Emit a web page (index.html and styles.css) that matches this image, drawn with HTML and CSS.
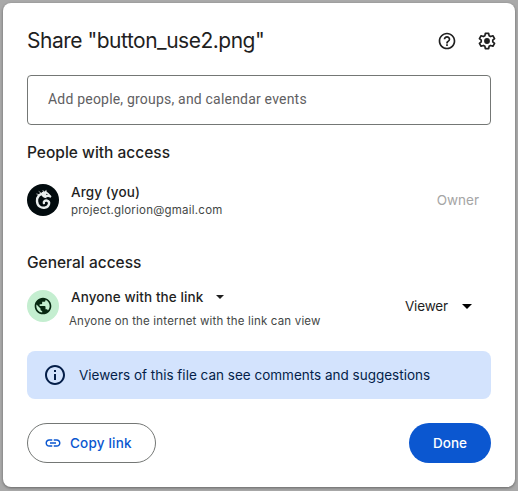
FILE: index.html
```
<!DOCTYPE html>
<html lang="en">
<head>
<meta charset="utf-8">
<title>Share</title>
<link rel="stylesheet" href="styles.css">
</head>
<body>
<main class="dialog">
  <header class="header">
    <h1 class="title"><span>Share "button_use2.png"</span></h1>
    <svg class="icon" viewBox="0 0 24 24"><path d="M11 18h2v-2h-2v2zm1-16C6.480 2 2 6.480 2 12s4.480 10 10 10 10-4.480 10-10S17.520 2 12 2zm0 18c-4.410 0-8-3.590-8-8s3.590-8 8-8 8 3.590 8 8-3.590 8-8 8zm0-14c-2.210 0-4 1.790-4 4h2c0-1.100.9-2 2-2s2 .9 2 2c0 2-3 1.750-3 5h2c0-2.250 3-2.500 3-5 0-2.210-1.790-4-4-4z"/></svg>
    <svg class="icon" viewBox="0 0 24 24"><path class="gear" d="M10 2.800h4l.5 2.800 1.900 1.100 2.700-1 2 3.400-2.200 1.900v2l2.200 1.900-2 3.400-2.700-1-1.900 1.100-.5 2.800h-4l-.5-2.800-1.900-1.100-2.700 1-2-3.400L5.100 13v-2L2.900 9.100l2-3.400 2.700 1 1.900-1.100z"/><circle cx="12" cy="12" r="3.500"/></svg>
  </header>
  <div class="input"><span>Add people, groups, and calendar events</span></div>
  <h2 class="heading people"><span>People with access</span></h2>
  <section class="row">
    <svg class="avatar" viewBox="0 0 32 32"><circle cx="16" cy="16" r="16" fill="#020b0e"/><g fill="none" stroke="#e9eeee" stroke-linecap="round"><path stroke-width="2.400" d="M17.500 9.500C12.500 9 9.800 13 10 17.200c.3 5 4.400 7.300 8.100 6.400 4.600-1.100 5.200-6.200 2-7-2.200-.5-3.700 1-3.200 2.500"/><path stroke-width=".7" d="M17 8.500l-1-2M14 9l-2-1.400M11.500 10.500L9.800 10"/></g><path fill="#e9eeee" d="M15 8l3-.8 1.200-1.500.5 2 2 1.500 2.800 3-.8 1.500-2.500-.7-2.200.2 1 1-3-.5-2.500-2z"/><path fill="#020b0e" d="M19 9.800l2 .8-1.500.3z"/></svg>
    <div class="details">
      <div class="name argy"><span>Argy (you)</span></div>
      <div class="sub email"><span>project.glorion@gmail.com</span></div>
    </div>
    <div class="owner"><span>Owner</span></div>
  </section>
  <h2 class="heading general"><span>General access</span></h2>
  <section class="row access">
    <div class="globe"><svg viewBox="0 0 24 24"><path d="M12 2C6.480 2 2 6.480 2 12s4.480 10 10 10 10-4.480 10-10S17.520 2 12 2zm-1 17.930c-3.950-.49-7-3.850-7-7.930 0-.62.080-1.210.21-1.790L9 15v1c0 1.100.9 2 2 2v1.930zm6.900-2.540c-.26-.81-1-1.390-1.900-1.390h-1v-3c0-.55-.45-1-1-1H8v-2h2c.55 0 1-.45 1-1V7h2c1.100 0 2-.9 2-2v-.41c2.930 1.190 5 4.060 5 7.410 0 2.080-.8 3.970-2.100 5.390z"/></svg></div>
    <div class="details">
      <div class="name anyone"><span>Anyone with the link</span><svg class="caret" viewBox="0 0 8 4"><path d="M0 0h8L4 4z"/></svg></div>
      <div class="sub note"><span>Anyone on the internet with the link can view</span></div>
    </div>
    <div class="viewer"><span>Viewer</span><svg class="caret-large" viewBox="0 0 10 5"><path d="M0 0h10L5 5z"/></svg></div>
  </section>
  <aside class="banner">
    <svg viewBox="0 0 24 24"><path d="M11 7h2v2h-2zm0 4h2v6h-2zm1-9C6.480 2 2 6.480 2 12s4.480 10 10 10 10-4.480 10-10S17.520 2 12 2zm0 18c-4.410 0-8-3.590-8-8s3.590-8 8-8 8 3.590 8 8-3.590 8-8 8z"/></svg>
    <span>Viewers of this file can see comments and suggestions</span>
  </aside>
  <footer class="footer">
    <button class="copy"><svg viewBox="0 0 24 24"><path d="M3.900 12c0-1.710 1.390-3.100 3.100-3.100h4V7H7c-2.760 0-5 2.240-5 5s2.240 5 5 5h4v-1.900H7c-1.710 0-3.100-1.390-3.100-3.100zM8 13h8v-2H8v2zm9-6h-4v1.900h4c1.710 0 3.100 1.390 3.100 3.100s-1.390 3.100-3.100 3.100h-4V17h4c2.760 0 5-2.240 5-5s-2.240-5-5-5z"/></svg><span>Copy link</span></button>
    <button class="done"><span>Done</span></button>
  </footer>
</main>
</body>
</html>
```
FILE: styles.css
```
* { box-sizing: border-box; }
body {
  margin: 0;
  padding: 3px;
  height: 491px;
  overflow: hidden;
  background: #a9a9a9;
  font-family: Inter, Roboto, "Liberation Sans", sans-serif;
  color: #1f1f1f;
  white-space: nowrap;
}
.dialog {
  width: 512px;
  height: 484px;
  padding: 24px;
  background: #fff;
  border-radius: 8px;
  box-shadow: 0 1px 3px rgba(0, 0, 0, .4);
}
svg { display: block; flex: none; }
.header { display: flex; align-items: center; height: 28px; gap: 20px; margin-right: -6px; }
.title { flex: 1; margin: 0; font-size: 21px; line-height: 28px; font-weight: 400; letter-spacing: -.49px; }
.icon { width: 20px; height: 20px; fill: #1f1f1f; }
.gear { fill: none; stroke: #1f1f1f; stroke-width: 2; stroke-linejoin: round; }
.input {
  height: 50px;
  margin-top: 20px;
  padding-left: 20px;
  border: 1px solid #747775;
  border-radius: 4px;
  font-family: Roboto, "Liberation Sans", sans-serif;
  font-size: 14px;
  line-height: 47px;
  letter-spacing: .2px;
  color: #5f6062;
}
.heading { margin: 0; font-size: 15.5px; line-height: 24px; font-weight: 500; }
.people { margin-top: 16px; }
.general { margin-top: 35px; }
.row { display: flex; height: 32px; margin-top: 19px; }
.access { margin-top: 15px; }
.avatar { width: 32px; height: 32px; }
.globe { display: flex; align-items: center; justify-content: center; width: 32px; height: 32px; border-radius: 50%; background: #c4eed0; }
.globe svg { width: 20px; height: 20px; fill: #072711; }
.details { flex: 1; margin-left: 12px; }
.name { display: flex; align-items: center; height: 20px; margin-top: -2px; font-size: 13.5px; font-weight: 500; letter-spacing: .1px; }
.sub { height: 16px; font-size: 11.5px; line-height: 16px; color: #444746; }
.email { letter-spacing: .22px; }
.anyone { margin-top: -3px; }
.note { margin: 6px 0 0 -2px; letter-spacing: .18px; }
.caret { width: 8px; height: 4px; margin-left: 13px; fill: #1f1f1f; }
.owner { padding-right: 12px; font-size: 13.5px; line-height: 32px; color: #a5a5a5; }
.viewer { display: flex; align-items: center; padding-right: 19px; font-size: 13.5px; letter-spacing: -.15px; }
.caret-large { width: 10px; height: 5px; margin-left: 14px; }
.banner { display: flex; align-items: center; height: 48px; margin-top: 29px; padding-left: 16px; gap: 12px; border-radius: 8px; background: #d3e3fd; color: #041e49; font-size: 13.5px; }
.banner svg { width: 24px; height: 24px; fill: #041e49; }
.footer { display: flex; justify-content: space-between; margin-top: 24px; }
button { display: flex; align-items: center; height: 40px; padding: 0; border-radius: 20px; font: 500 13.5px Inter, Roboto, "Liberation Sans", sans-serif; }
.copy { width: 129px; padding-left: 16px; gap: 8px; border: 1px solid #747775; background: #fff; color: #0b57d0; letter-spacing: .2px; }
.copy svg { width: 18px; height: 18px; fill: #0b57d0; }
.done { justify-content: center; width: 82px; border: 0; background: #0b57d0; color: #fff; }
```
